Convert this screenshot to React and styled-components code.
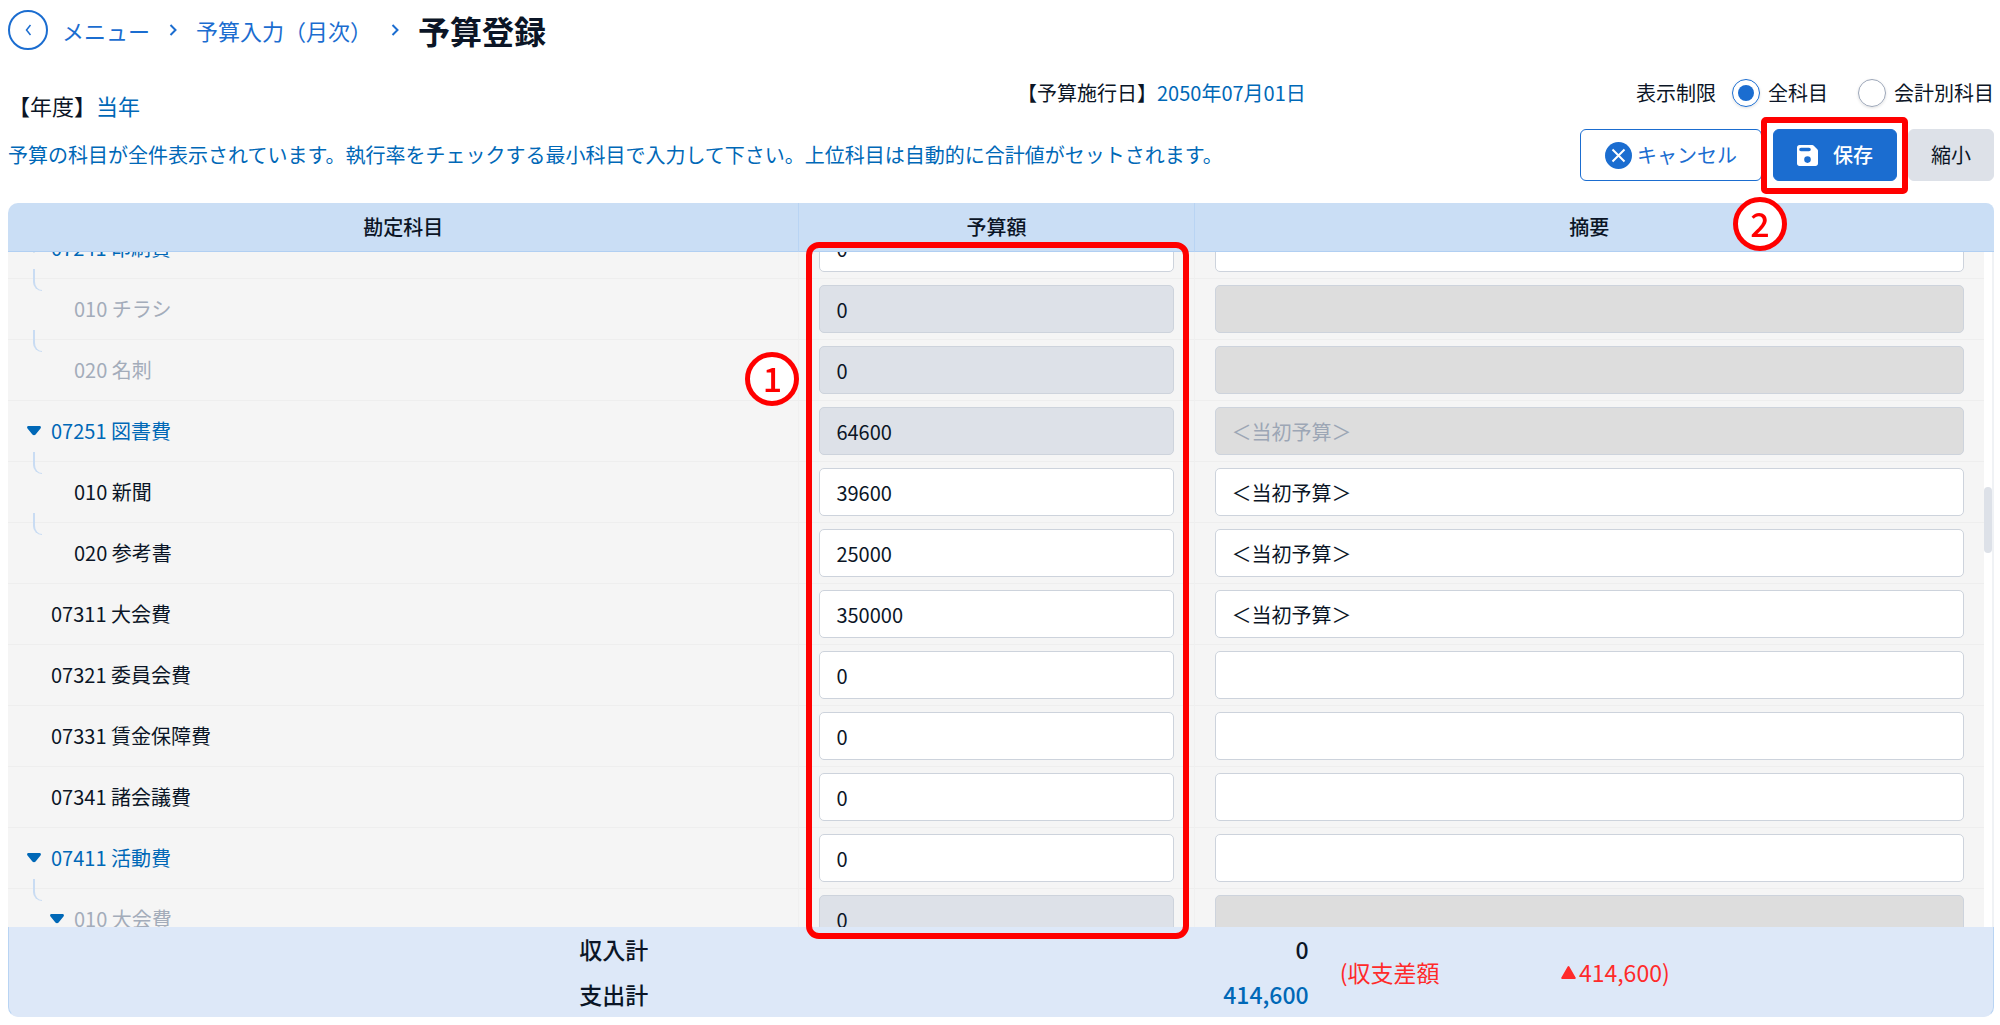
import { useLayoutEffect, useRef, useState } from 'react'
import styled, { createGlobalStyle } from 'styled-components'

const accounts = [
  { code: '07241', name: '印刷費', level: 0, open: true, amount: '0', note: '' },
  { code: '010', name: 'チラシ', level: 1, muted: true, amount: '0', note: '', locked: true },
  { code: '020', name: '名刺', level: 1, muted: true, amount: '0', note: '', locked: true },
  { code: '07251', name: '図書費', level: 0, open: true, amount: '64600', note: '＜当初予算＞', locked: true },
  { code: '010', name: '新聞', level: 1, amount: '39600', note: '＜当初予算＞' },
  { code: '020', name: '参考書', level: 1, amount: '25000', note: '＜当初予算＞' },
  { code: '07311', name: '大会費', level: 0, amount: '350000', note: '＜当初予算＞' },
  { code: '07321', name: '委員会費', level: 0, amount: '0', note: '' },
  { code: '07331', name: '賃金保障費', level: 0, amount: '0', note: '' },
  { code: '07341', name: '諸会議費', level: 0, amount: '0', note: '' },
  { code: '07411', name: '活動費', level: 0, open: true, amount: '0', note: '' },
  { code: '010', name: '大会費', level: 1, open: true, muted: true, amount: '0', note: '', locked: true }
]

//where the list stands when the screen opens
const START_SCROLL = 34

function Chevron () {
  return (
    <svg width='8' height='12' viewBox='0 0 8 12' fill='none' stroke='currentColor' strokeWidth='2'>
      <path d='M1.5 1l5 5-5 5' />
    </svg>
  )
}

function BudgetRow ({ account }) {
  const [amount, setAmount] = useState(account.amount)
  const [note, setNote] = useState(account.note)
  const title = `${account.code} ${account.name}`

  return (
    <tr>
      <Cell>
        <AccountName $level={account.level}>
          {account.level > 0 && <Branch />}
          <Toggler>
            {account.open && (
              <ToggleButton type='button' aria-label={title}>
                <svg width='14' height='10' viewBox='0 0 14 10' fill='currentColor'>
                  <path d='M1.6 0h10.8c1.5 0 2 1.4 1.1 2.4L8.6 8.5c-.9 1-2.3 1-3.2 0L.5 2.4C-.4 1.4.1 0 1.6 0z' />
                </svg>
              </ToggleButton>
            )}
          </Toggler>
          <AccountText $muted={account.muted} $parent={account.open}>
            {title}
          </AccountText>
        </AccountName>
      </Cell>
      <Cell>
        <AmountInput
          type='text'
          aria-label={`${title} 予算額`}
          value={amount}
          readOnly={account.locked}
          $locked={account.locked}
          onChange={e => setAmount(e.target.value)}
        />
      </Cell>
      <Cell>
        <NoteInput
          type='text'
          aria-label={`${title} 摘要`}
          value={note}
          readOnly={account.locked}
          $locked={account.locked}
          onChange={e => setNote(e.target.value)}
        />
      </Cell>
    </tr>
  )
}

function App () {
  const [scope, setScope] = useState('all')
  const scroller = useRef(null)

  useLayoutEffect(() => {
    scroller.current.scrollTop = START_SCROLL
  }, [])

  return (
    <Page>
      <GlobalStyle />
      {/**Breadcrumbs */}
      <TopBar>
        <BackButton type='button' aria-label='戻る'>
          <svg width='7' height='12' viewBox='0 0 7 12' fill='none' stroke='currentColor' strokeWidth='1.5'>
            <path d='M5.5 1L1.5 6l4 5' />
          </svg>
        </BackButton>
        <Crumb href='#menu'>メニュー</Crumb>
        <Separator>
          <Chevron />
        </Separator>
        <Crumb href='#monthly'>予算入力（月次）</Crumb>
        <Separator>
          <Chevron />
        </Separator>
        <Title>予算登録</Title>
      </TopBar>

      {/**Year, date and display filter */}
      <InfoRow>
        <Year>
          【年度】<Blue>当年</Blue>
        </Year>
        <DateAndFilter>
          <span>
            【予算施行日】<Blue>2050年07月01日</Blue>
          </span>
          <Filter>
            <FilterLegend>表示制限</FilterLegend>
            <RadioLabel>
              <Radio type='radio' name='scope' checked={scope === 'all'} onChange={() => setScope('all')} />
              全科目
            </RadioLabel>
            <RadioLabel>
              <Radio type='radio' name='scope' checked={scope === 'book'} onChange={() => setScope('book')} />
              会計別科目
            </RadioLabel>
          </Filter>
        </DateAndFilter>
      </InfoRow>

      {/**Message and buttons */}
      <ActionRow>
        <Message>
          予算の科目が全件表示されています。執行率をチェックする最小科目で入力して下さい。上位科目は自動的に合計値がセットされます。
        </Message>
        <Buttons>
          <CancelButton type='button'>
            <svg width='27' height='27' viewBox='0 0 27 27'>
              <circle cx='13.5' cy='13.5' r='13.5' fill='#1b6dd0' />
              <path d='M7.5 7.5l12 12M19.5 7.5l-12 12' stroke='#fff' strokeWidth='2' />
            </svg>
            キャンセル
          </CancelButton>
          <SaveArea>
            <SaveButton type='button'>
              <svg width='21' height='21' viewBox='0 0 21 21'>
                <path
                  fill='#fff'
                  fillRule='evenodd'
                  d='M2.5 0h12.7c.6 0 1.2.2 1.6.7l3.5 3.5c.4.4.7 1 .7 1.6v12.7c0 1.4-1.1 2.5-2.5 2.5h-16C1.1 21 0 19.9 0 18.500v-16C0 1.100 1.100 0 2.500 0zM4 2.700a1.800 1.800 0 000 3.600h8a1.800 1.800 0 000-3.600zM10.500 11.300a3.300 3.300 0 100 6.600 3.300 3.300 0 000-6.600z'
                />
              </svg>
              保存
            </SaveButton>
            <SaveFrame />
            <SaveStep>2</SaveStep>
          </SaveArea>
          <ShrinkButton type='button'>縮小</ShrinkButton>
        </Buttons>
      </ActionRow>

      {/**Budget list */}
      <Panel>
        <ListArea>
          <Scroller ref={scroller}>
            <Table>
              <colgroup>
                <col width='40%' />
                <col width='20%' />
                <col width='40%' />
              </colgroup>
              <thead>
                <tr>
                  <HeadCell scope='col'>勘定科目</HeadCell>
                  <HeadCell scope='col'>予算額</HeadCell>
                  <HeadCell scope='col'>摘要</HeadCell>
                </tr>
              </thead>
              <tbody>
                {accounts.map((account, i) => (
                  <BudgetRow key={i} account={account} />
                ))}
              </tbody>
            </Table>
          </Scroller>
          <AmountFrame />
          <AmountStep>1</AmountStep>
        </ListArea>
        <Rail>
          <RailHead />
          <RailSpace $grow={235} />
          <Thumb />
          <RailSpace $grow={374} />
        </Rail>
      </Panel>

      {/**Totals */}
      <Footer>
        <TotalColumn>
          <span>収入計</span>
          <span>支出計</span>
        </TotalColumn>
        <TotalColumn>
          <span>0</span>
          <Blue>414,600</Blue>
        </TotalColumn>
        <Difference>
          <span>(収支差額</span>
          <DifferenceValue>
            <svg width='15' height='13' viewBox='0 0 15 13' fill='currentColor'>
              <path d='M6.7.6c.4-.8 1.2-.8 1.6 0l6.3 10.8c.5.8.1 1.6-.8 1.6H1.2c-.9 0-1.3-.8-.8-1.6z' />
            </svg>
            414,600)
          </DifferenceValue>
        </Difference>
      </Footer>
    </Page>
  )
}

export default App

const GlobalStyle = createGlobalStyle`
  * {
    box-sizing: border-box;
  }
  body {
    margin: 0;
    background-color: white;
    color: #0b1526;
    font-size: 20px;
    line-height: 28px;
    font-family: 'Noto Sans CJK JP', 'Noto Sans', sans-serif;
  }
  button, input {
    font: inherit;
    color: inherit;
  }
  button {
    cursor: pointer;
  }
`

const Page = styled.main`
  height: 100vh;
  min-height: 600px;
  display: flex;
  flex-direction: column;
  padding: 8px 6px 8px 8px;
`

const TopBar = styled.nav`
  display: flex;
  align-items: center;
  height: 44px;
  font-size: 22px;
  color: #1b6dd0;
`

const BackButton = styled.button`
  display: flex;
  align-items: center;
  justify-content: center;
  width: 40px;
  height: 40px;
  margin-right: 14px;
  padding: 0;
  border: 2px solid #1b6dd0;
  border-radius: 50%;
  background-color: white;
  color: #1b6dd0;
`

const Crumb = styled.a`
  color: inherit;
  text-decoration: none;
`

const Separator = styled.span`
  display: flex;
  justify-content: center;
  width: 46px;
`

const Title = styled.h1`
  margin: 0;
  font-size: 32px;
  font-weight: 700;
  color: #0b1526;
`

const Blue = styled.span`
  color: #0068b7;
`

const InfoRow = styled.div`
  display: grid;
  grid-template-columns: 1009fr 977fr;
  padding-top: 27px;
  height: 67px;
`

const Year = styled.div`
  align-self: end;
  font-size: 22px;
`

const DateAndFilter = styled.div`
  display: flex;
  align-items: flex-start;
  justify-content: space-between;
  white-space: nowrap;
`

const Filter = styled.div`
  display: flex;
  align-items: flex-start;
`

const FilterLegend = styled.span`
  margin-right: 16px;
`

const RadioLabel = styled.label`
  display: flex;
  align-items: center;
  gap: 8px;
  & + & {
    margin-left: 30px;
  }
`

const Radio = styled.input`
  appearance: none;
  display: grid;
  place-content: center;
  width: 28px;
  height: 28px;
  margin: 0;
  border: 1px solid #9ca6b8;
  border-radius: 50%;
  box-shadow: 0 1px 3px #0000001f;
  &:checked {
    border-color: #1b6dd0;
  }
  &:checked::before {
    content: '';
    width: 16px;
    height: 16px;
    border-radius: 50%;
    background-color: #1b6dd0;
  }
`

const ActionRow = styled.div`
  display: flex;
  align-items: center;
  justify-content: space-between;
  margin: 10px 0 22px 0;
`

const Message = styled.p`
  margin: 0;
  color: #0068b7;
`

const Buttons = styled.div`
  display: flex;
  gap: 11px;
  white-space: nowrap;
`

const Button = styled.button`
  display: flex;
  align-items: center;
  height: 52px;
  border-radius: 6px;
`

const CancelButton = styled(Button)`
  gap: 5px;
  padding: 0 24px;
  border: 1px solid #1b6dd0;
  background-color: white;
  color: #1b6dd0;
`

const SaveArea = styled.div`
  position: relative;
`

const SaveButton = styled(Button)`
  gap: 15px;
  padding: 0 23px;
  border: 1px solid #1b6dd0;
  background-color: #1b6dd0;
  color: white;
  font-weight: 500;
`

const ShrinkButton = styled(Button)`
  padding: 0 22px;
  border: 1px solid #dde1e8;
  background-color: #dde1e8;
`

//red guides laid over the screen
const Frame = styled.div`
  position: absolute;
  z-index: 4;
  border: 6px solid #ff0000;
  pointer-events: none;
`

const Step = styled.div`
  position: absolute;
  z-index: 5;
  width: 54px;
  height: 54px;
  border: 5px solid #ff0000;
  border-radius: 50%;
  background-color: white;
  color: #ff0000;
  font-size: 34px;
  font-weight: 500;
  line-height: 42px;
  text-align: center;
`

const SaveFrame = styled(Frame)`
  inset: -12px -11px -13px -12px;
  border-radius: 5px;
`

const SaveStep = styled(Step)`
  top: 68px;
  left: -40px;
`

const Panel = styled.div`
  flex: 1;
  min-height: 0;
  display: flex;
  border-right: 2px solid #f0f2f5;
  border-radius: 10px 10px 0 0;
`

const ListArea = styled.div`
  position: relative;
  flex: 1;
  min-width: 0;
`

const Scroller = styled.div`
  height: 100%;
  overflow-y: auto;
  scrollbar-width: none;
  border-radius: 10px 0 0 0;
`

const Table = styled.table`
  width: 100%;
  table-layout: fixed;
  border-spacing: 0;
`

const HeadCell = styled.th`
  position: sticky;
  top: 0;
  z-index: 2;
  height: 49px;
  padding: 0;
  border-bottom: 1px solid #b1cff2;
  background-color: #cadef5;
  font-weight: 500;
  & + & {
    border-left: 1px solid #b9d4f3;
  }
`

const Cell = styled.td`
  height: 61px;
  padding: 6px 20px;
  border-bottom: 1px solid #eeeeee;
  background-color: #f5f5f5;
  &:first-child {
    padding-left: 19px;
  }
  & + & {
    border-left: 1px solid #f0f0f0;
  }
`

const AccountName = styled.div`
  position: relative;
  display: flex;
  align-items: center;
  height: 48px;
  padding-left: ${props => props.$level * 23}px;
`

const Branch = styled.span`
  position: absolute;
  top: -16px;
  left: 6px;
  z-index: 1;
  width: 9px;
  height: 22px;
  border-left: 2px solid #c9dcf3;
  border-bottom: 1px solid #c9dcf3;
  border-bottom-left-radius: 9px;
`

const Toggler = styled.span`
  display: flex;
  width: 24px;
`

const ToggleButton = styled.button`
  display: flex;
  padding: 0;
  border: none;
  background: none;
  color: #0068b7;
`

const AccountText = styled.span`
  color: ${props => (props.$muted ? '#a3acba' : props.$parent ? '#0068b7' : 'inherit')};
`

const Field = styled.input`
  display: block;
  width: 100%;
  height: 48px;
  padding: 0 16px;
  border: 1px solid #cdd3dc;
  border-radius: 5px;
  outline: none;
  background-color: white;
`

const AmountInput = styled(Field)`
  background-color: ${props => (props.$locked ? '#dde1e8' : 'white')};
`

const NoteInput = styled(Field)`
  background-color: ${props => (props.$locked ? '#dddddd' : 'white')};
  color: ${props => (props.$locked ? '#9ca6b5' : 'inherit')};
`

const AmountFrame = styled(Frame)`
  top: 39px;
  right: calc(40% + 5px);
  bottom: -12px;
  left: calc(40% + 8px);
  border-radius: 13px;
`

const AmountStep = styled(Step)`
  top: 149px;
  left: calc(40% - 53px);
`

const Rail = styled.div`
  display: flex;
  flex-direction: column;
  width: 8px;
`

const RailHead = styled.div`
  height: 49px;
  margin-right: -2px;
  border-bottom: 1px solid #b1cff2;
  border-top-right-radius: 8px;
  background-color: #cadef5;
`

const RailSpace = styled.div`
  flex: ${props => props.$grow};
`

const Thumb = styled.div`
  height: 66px;
  border-radius: 4px;
  background-color: #dde1e8;
`

const Footer = styled.footer`
  display: grid;
  grid-template-columns: 640fr 661fr 685fr;
  align-items: center;
  height: 90px;
  border: 1px solid #b9d4f3;
  border-top: none;
  border-bottom-color: #dde8f8;
  border-radius: 0 0 10px 10px;
  background-color: #dde8f8;
  font-size: 23px;
  font-weight: 500;
`

const TotalColumn = styled.div`
  display: flex;
  flex-direction: column;
  align-items: flex-end;
  line-height: 45px;
`

const Difference = styled.div`
  display: flex;
  justify-content: space-between;
  width: 361px;
  padding-left: 31px;
  color: #ff2a2a;
  font-weight: 400;
`

const DifferenceValue = styled.span`
  display: flex;
  align-items: center;
  gap: 3px;
`
